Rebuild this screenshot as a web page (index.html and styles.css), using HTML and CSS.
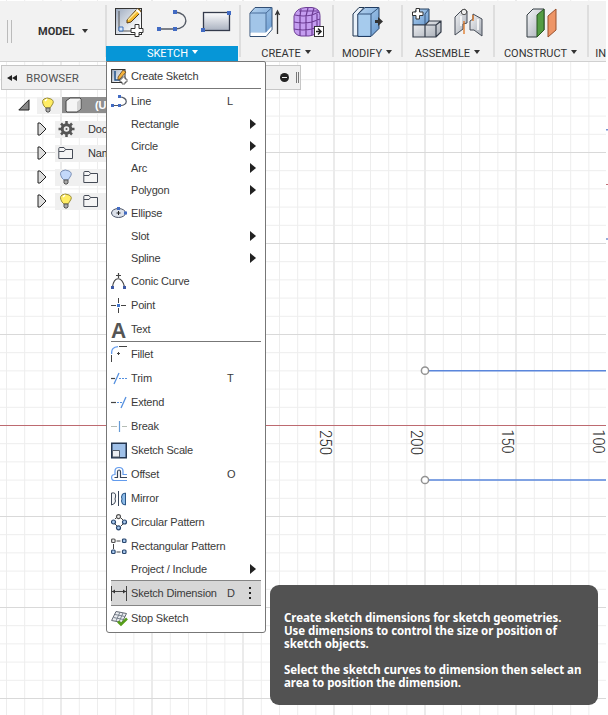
FILE: index.html
```html
<!DOCTYPE html>
<html lang="en">
<head>
<meta charset="utf-8">
<title>Sketch workspace</title>
<link rel="stylesheet" href="styles.css">
</head>
<body>
<div class="app">
  <svg class="canvas" width="608" height="715" viewBox="0 0 608 715">
    <defs>
      <linearGradient id="steel" x1="0" y1="0" x2="1" y2="1"><stop offset="0" stop-color="#9ba9be"/><stop offset=".8" stop-color="#fff"/></linearGradient>
      <linearGradient id="sheet" x1="0" y1="0" x2="0" y2="1"><stop offset="0" stop-color="#fdfdfe"/><stop offset="1" stop-color="#a9b1c0"/></linearGradient>
      <linearGradient id="blue" x1="0" y1="0" x2="1" y2="1"><stop offset="0" stop-color="#b5d3f0"/><stop offset="1" stop-color="#6799cf"/></linearGradient>
      <linearGradient id="grey" x1="0" y1="0" x2="1" y2="1"><stop offset="0" stop-color="#f4f5f7"/><stop offset="1" stop-color="#a6acb5"/></linearGradient>
      <pattern id="minor" width="18.2" height="18.2" patternUnits="userSpaceOnUse" x="60.6" y="61">
        <path d="M.5 0V18.2M0 .5H18.2" stroke="#ededed"/>
      </pattern>
      <pattern id="major" width="91" height="91" patternUnits="userSpaceOnUse" x="60" y="61">
        <path d="M1 0V91" stroke="#ebebeb" stroke-width="2"/><path d="M0 .5H91" stroke="#d9d9d9"/>
      </pattern>
    </defs>
    <rect width="608" height="715" fill="#fff"/>
    <rect width="606" height="715" fill="url(#minor)"/>
    <rect width="606" height="715" fill="url(#major)"/>
    <rect y="425" width="606" height="1" fill="#bd6a70"/>
    <path d="M429 370.7H606M429 480H606" stroke="#5a86dc" stroke-width="1.5"/>
    <g fill="#fff" stroke="#929292" stroke-width="1.5"><circle cx="425" cy="370.7" r="3.6"/><circle cx="425" cy="480" r="3.6"/></g>
    <path d="M606 129.7h2M606 239h2" stroke="#7692d0" stroke-width="1.5"/><path d="M606 184.5h2" stroke="#bc7379"/>
    <g class="scale-labels">
      <text transform="translate(320 430) rotate(90)" textLength="25" lengthAdjust="spacingAndGlyphs">250</text>
      <text transform="translate(411 430) rotate(90)" textLength="25" lengthAdjust="spacingAndGlyphs">200</text>
      <text transform="translate(502 429.500) rotate(90)" textLength="24" lengthAdjust="spacingAndGlyphs">150</text>
      <text transform="translate(593 429.500) rotate(90)" textLength="24" lengthAdjust="spacingAndGlyphs">100</text>
    </g>
  </svg>

  <header class="toolbar">
    <div class="workspace"><i class="grip"></i><span>MODEL</span><i class="caret"></i></div>
    <section class="group sketch">
      <div class="tools">
        <svg width="30" height="32" viewBox="0 0 30 32"><rect x="1.5" y="3.500" width="26" height="26" fill="url(#steel)" stroke="#333"/><path d="M5 6V26H24" fill="none" stroke="#555"/><path d="M5 22h4v4H5z" fill="#d9e8fa" stroke="#3c71ba"/><path d="M13 15L23 4q3-1 4 3L17 17l-4 1z" fill="#f2b82d" stroke="#583c18"/><path d="M14 15L23 6" fill="none" stroke="#ffe999" stroke-width="1.500"/><path d="M22.500 4.500l4 4" stroke="#fff" stroke-width="2"/><path d="M21 19.500h4v4h4v4h-4v4h-4v-4h-4v-4h4z" fill="#fff" stroke="#333"/></svg>
        <svg width="32" height="32" viewBox="0 0 32 32"><path d="M3 24H19C33 24 34 8 19 7" fill="none" stroke="#555b66" stroke-width="1.4"/><path d="M1 22h4v4H1zm16 0h4v4h-4zm0-17h4v4h-4z" fill="#426bc3"/></svg>
        <svg width="32" height="32" viewBox="0 0 32 32"><rect x="3.500" y="7.500" width="26" height="18" fill="url(#sheet)" stroke="#343b4c" stroke-width="1.300"/><path d="M1 23h4v4H1zM27 6h4v4h-4z" fill="#426bc3"/></svg>
      </div>
      <div class="caption">SKETCH<i class="caret"></i></div>
    </section>
    <section class="group create">
      <div class="tools">
        <svg width="34" height="34" viewBox="0 0 34 34"><path d="M2 7L7 1.500h17v22l-6 7H2z" fill="url(#blue)" stroke="#314e74"/><path d="M2.500 7.500H18V26H2.500z" fill="#a2c5e8"/><path d="M2 7h16l6-5.500M18 7v19" fill="none" stroke="#4b6f9b"/><path d="M2.500 26.500H18l5.500-6v3L18 30H2.500z" fill="#fff"/><path d="M29.500 28V6m-2 3l2-4 2 4" fill="none" stroke="#333" stroke-width="1.300"/></svg>
        <svg width="34" height="34" viewBox="0 0 34 34"><path d="M2 10Q4 2 14 1.500h6q8 1 8 8V23q-3 6-11 7H9q-7-1-7-7z" fill="#c49df0" stroke="#6d3d95"/><path d="M3 9q8 2 17 0l7-3M2 16q9 2 18 0l8-3M2 23q9 2 18 0l8-3M9 3L8 10v20M16 2l-2 8v20M22 2l-2 7v20M25 8v16M7 5l19 0" fill="none" stroke="#6d3d95" stroke-width="1.200"/><rect x="22.500" y="20.500" width="9" height="10" fill="#fff" stroke="#333"/><path d="M24 25.500h4m-2-3l3 3-3 3" fill="none" stroke="#222" stroke-width="1.5"/></svg>
      </div>
      <div class="caption">CREATE<i class="caret"></i></div>
    </section>
    <section class="group modify">
      <div class="tools"><svg width="32" height="34" viewBox="0 0 32 34"><path d="M1 8L7 1.500h5L6 8v22H1z" fill="#e9f1f9" stroke="#1f3550"/><path d="M6 8l7-6.500h14v21l-8 8H6z" fill="url(#blue)" stroke="#203c62"/><path d="M6.500 8.500h12v21h-12z" fill="#a6cbed"/><path d="M6 8h13v22M19 8l8-6.500" fill="none" stroke="#36577e"/><path d="M23 14h3v-3l5 4.500-5 4.500v-3h-3z" fill="#333"/></svg></div>
      <div class="caption">MODIFY<i class="caret"></i></div>
    </section>
    <section class="group assemble">
      <div class="tools">
        <svg width="32" height="34" viewBox="0 0 32 34"><path d="M2 8l4-5h12v13l-4 3H2z" fill="url(#blue)" stroke="#26405f"/><path d="M14 8l4-5M14 8v11" stroke="#36577e"/><path d="M2 19h12v12H2zM14 19l4-4h12v11l-5 5H14zM14 19h11v12m0-12l5-4" fill="url(#grey)" stroke="#333b48" stroke-width="1.200"/><path d="M5 2.500h3.500v3.500H12v3.500H8.500V13H5V9.500H1.500V6H5z" fill="#fff" stroke="#333"/></svg>
        <svg width="32" height="34" viewBox="0 0 32 34"><path d="M2 11l7-7q3-2 5 1v12l-4 1v5l-8 6z" fill="url(#grey)" stroke="#444b56"/><circle cx="11" cy="6" r="2.700" fill="#eee" stroke="#555"/><path d="M17 15l3-2V8l9 5v17l-8-6-4 0z" fill="url(#grey)" stroke="#444b56"/><path d="M11 15v13M20 9v6" stroke="#de7622" stroke-width="1.300"/><path d="M8 10v10M25 13v11" stroke="#fff" stroke-width="1.500"/></svg>
      </div>
      <div class="caption">ASSEMBLE<i class="caret"></i></div>
    </section>
    <section class="group construct">
      <div class="tools"><svg width="34" height="34" viewBox="0 0 34 34"><path d="M3 9l6-6h11v21l-7 7H3z" fill="url(#grey)" stroke="#333c42"/><path d="M13 9l7-6v21l-7 7z" fill="#549d43" stroke="#27551f"/><path d="M24 10l8-7v21l-8 7z" fill="#ee9566" stroke="#99502d"/></svg></div>
      <div class="caption">CONSTRUCT<i class="caret"></i></div>
    </section>
    <section class="group inspect"><div class="tools"></div><div class="caption">IN</div></section>
  </header>

  <div class="browser-head"><svg width="12" height="8" viewBox="0 0 12 8"><path d="M5 1v6L0 4zm5 0v6L5 4z" fill="#222"/></svg><span>BROWSER</span><i class="minus"></i><i class="small-grip"></i></div>
  <div class="tree">
    <div class="node root"><svg class="open" width="12" height="12" viewBox="0 0 12 12"><path d="M11 .8V11H.8z" fill="#888" stroke="#222"/></svg><div class="strip"><svg width="25" height="16" viewBox="0 0 25 16"><use href="#bulb" x="3"/></svg><div class="selected"><svg width="18" height="16" viewBox="0 0 18 16"><path d="M1 4l4-3h10l1 1v10l-4 3H2l-1-1z" fill="#f5f5f5" stroke="#444"/><path d="M12 5l3.500-3v9.500L12 14.500z" fill="#d4d4d4"/></svg><b>(U</b></div></div></div>
    <div class="node"><svg class="closed" width="11" height="14" viewBox="0 0 11 14"><path id="fold" d="M1 1l2 0 6 6-6 6H1z" fill="#ddd" stroke="#222"/></svg><div class="strip"><svg width="17" height="16" viewBox="0 0 17 16"><circle cx="8.500" cy="8" r="4.300" fill="#eee" stroke="#555" stroke-width="3"/><path d="M8.500 0v3m0 10v3M.5 8h3m10 0h3M3 2.500l2 2m7 7l2 2m0-11l-2 2m-7 7l-2 2" stroke="#555" stroke-width="2.500"/><circle cx="8.500" cy="8" r="1" fill="#555"/></svg><span>Doc</span></div></div>
    <div class="node"><svg class="closed" width="11" height="14" viewBox="0 0 11 14"><use href="#fold"/></svg><div class="strip"><svg width="17" height="16" viewBox="0 0 17 16"><use href="#folder"/></svg><span>Nam</span></div></div>
    <div class="node"><svg class="closed" width="11" height="14" viewBox="0 0 11 14"><use href="#fold"/></svg><div class="strip"><svg width="17" height="16" viewBox="0 0 17 16"><path d="M4 9Q1 4 4 2t7 0 1 6l-2 3H6z" fill="#c3d8fa" stroke="#7a8fb6"/><path d="M6 11h4v3l-1 1H7l-1-1z" fill="#aaa" stroke="#555"/></svg><svg class="second" width="17" height="16" viewBox="0 0 17 16"><use href="#folder"/></svg></div></div>
    <div class="node"><svg class="closed" width="11" height="14" viewBox="0 0 11 14"><use href="#fold"/></svg><div class="strip"><svg width="17" height="16" viewBox="0 0 17 16"><g id="bulb"><path d="M4 9Q1 4 4 2t7 0 1 6l-2 3H6z" fill="#ffed63" stroke="#9a8c38"/><path d="M6 11h4v3l-1 1H7l-1-1z" fill="#aaa" stroke="#555"/><path d="M5 4l2-2" stroke="#fff" stroke-width="1.500"/></g></svg><svg class="second" width="17" height="16" viewBox="0 0 17 16"><path id="folder" d="M.8 13.500v-10q0-1 1-1h4.200l1.500 2h7v9zM1 6.500h5l1.500-2" fill="#f5f5f5" stroke="#454b56"/></svg></div></div>
  </div>

  <nav class="menu">
    <div class="item"><svg width="17" height="17" viewBox="0 0 17 17"><rect x=".6" y="1.500" width="13.400" height="13" fill="url(#steel)" stroke="#333"/><path d="M4 3v9h7" fill="none" stroke="#23538a" stroke-width="1.500"/><path d="M7 9l5-7 3 2-6 7-2 1z" fill="#f4b23c" stroke="#60431e" stroke-width=".8"/><path d="M11 9h3v2h2v3h-2v2h-3v-2H9v-3h2z" fill="#fff" stroke="#444" stroke-width=".8"/></svg><span>Create Sketch</span></div>
    <hr>
    <div class="item"><svg width="17" height="17" viewBox="0 0 17 17"><path d="M1 12.500h8C17 13 18 4 8 4" fill="none" stroke="#505866" stroke-width="1.200"/><path d="M0 11h3v3H0zm7 0h3v3H7zm0-9h3v3H7z" fill="#426bc3"/></svg><span>Line</span><kbd>L</kbd></div>
    <div class="item plain"><span>Rectangle</span><i class="arrow"></i></div>
    <div class="item plain"><span>Circle</span><i class="arrow"></i></div>
    <div class="item plain"><span>Arc</span><i class="arrow"></i></div>
    <div class="item plain"><span>Polygon</span><i class="arrow"></i></div>
    <div class="item"><svg width="17" height="17" viewBox="0 0 17 17"><ellipse cx="7.500" cy="8" rx="7" ry="4.500" fill="#dce1ea" stroke="#4b5468"/><path d="M5.500 8h4m-2-2v4" stroke="#222"/><path d="M6 2h3v3H6zm7 4.500h3v3h-3z" fill="#426bc3"/></svg><span>Ellipse</span></div>
    <div class="item plain"><span>Slot</span><i class="arrow"></i></div>
    <div class="item plain"><span>Spline</span><i class="arrow"></i></div>
    <div class="item"><svg width="17" height="17" viewBox="0 0 17 17"><path d="M1.500 14C3 3 11 3 13.500 14M7.500 0v5M5 2.500h5" fill="none" stroke="#444" stroke-width="1.200"/><path d="M0 13h3v3H0zm12 0h3v3h-3z" fill="#3d59a5"/></svg><span>Conic Curve</span></div>
    <div class="item"><svg width="17" height="17" viewBox="0 0 17 17"><path d="M0 8.500h5m5 0h5M7.500 1v5m0 5v5" stroke="#444"/><path d="M6 7h3v3H6z" fill="#4276cc"/></svg><span>Point</span></div>
    <div class="item"><svg width="17" height="17" viewBox="0 0 17 17"><text class="letter-icon" x="0" y="16.500" textLength="15" lengthAdjust="spacingAndGlyphs">A</text></svg><span>Text</span></div>
    <hr>
    <div class="item"><svg width="17" height="17" viewBox="0 0 17 17"><path d="M.7 8Q0 1 7 .7" fill="none" stroke="#639bed" stroke-width="1.300"/><path d="M8 .5h8M.5 9v7M6 7.500h3M7.500 6v3" stroke="#444"/></svg><span>Fillet</span></div>
    <div class="item"><svg width="17" height="17" viewBox="0 0 17 17"><path d="M0 8.500h4" stroke="#444" stroke-width="1.200"/><path d="M3 14L8 3" stroke="#5590df" stroke-width="1.300"/><path d="M8 8.500h8" stroke="#5590df" stroke-dasharray="2 1"/></svg><span>Trim</span><kbd>T</kbd></div>
    <div class="item"><svg width="17" height="17" viewBox="0 0 17 17"><path d="M0 8.500h5" stroke="#444" stroke-width="1.200"/><path d="M6 8.500h5" stroke="#5590df" stroke-dasharray="2 1"/><path d="M10 14l5-11" stroke="#5590df" stroke-width="1.300"/></svg><span>Extend</span></div>
    <div class="item"><svg width="17" height="17" viewBox="0 0 17 17"><path d="M0 8.500h6m5 0h5" stroke="#b5bdb5"/><path d="M8.500 3v11" stroke="#669bd6" stroke-width="1.200"/></svg><span>Break</span></div>
    <div class="item"><svg width="17" height="17" viewBox="0 0 17 17"><rect x=".75" y="1.250" width="14.500" height="14.500" fill="#9fc0e8" stroke="#23354f" stroke-width="1.500"/><path d="M1.500 8.500h7V15h-7z" fill="#eceef2" stroke="#555e6b"/></svg><span>Sketch Scale</span></div>
    <div class="item"><svg width="17" height="17" viewBox="0 0 17 17"><path d="M16 14.500H3.500Q.6 14.500.6 11.500T4 8.500V5q0-3.500 4-3.500T12 5v3.500h4" fill="none" stroke="#629bed" stroke-width="1.200"/><path d="M16 11.500h-6.500V6q0-2-1.500-2T6.500 6v5.500H3.500" fill="none" stroke="#374459" stroke-width="1.200"/></svg><span>Offset</span><kbd>O</kbd></div>
    <div class="item"><svg width="17" height="17" viewBox="0 0 17 17"><path d="M.5 15V3q5-1 4 4-1 2 0 4 0 3-4 4z" fill="#f3f5f8" stroke="#3e4858"/><path d="M7.500 1v15" stroke="#374459"/><path d="M14.500 3v12q-4 0-4-4 1-2 0-4 0-4 4-4z" fill="#8ebce9" stroke="#295485"/></svg><span>Mirror</span></div>
    <div class="item"><svg width="17" height="17" viewBox="0 0 17 17"><path d="M4 5l2-2m3 0l3 3M4 10l2 2m6-2l-2 2" stroke="#444"/><g fill="#a9caf0" stroke="#29466d" stroke-width="1.200"><circle cx="7.500" cy="2.700" r="2" fill="#eee" stroke="#555"/><circle cx="2.500" cy="8" r="2"/><circle cx="13.500" cy="8" r="2"/><circle cx="7.500" cy="13.800" r="2"/></g></svg><span>Circular Pattern</span></div>
    <div class="item"><svg width="17" height="17" viewBox="0 0 17 17"><path d="M5.500 3h4M2.500 6v5M5.500 14h4" stroke="#444"/><g fill="#a9caf0" stroke="#29466d" stroke-width="1.200"><rect x=".6" y="1" width="3.500" height="3.500" rx="1" fill="#eee" stroke="#555"/><rect x="11.500" y="1" width="3.500" height="3.500" rx="1"/><rect x=".6" y="12" width="3.500" height="3.500" rx="1"/><rect x="11.500" y="12" width="3.500" height="3.500" rx="1"/></g></svg><span>Rectangular Pattern</span></div>
    <div class="item plain"><span>Project / Include</span><i class="arrow"></i></div>
    <div class="item active"><svg width="17" height="17" viewBox="0 0 17 17"><path d="M.5 1v15m15-15v15M1 6.500h14" stroke="#444"/><path d="M1 6.500l3-2v4zm14 0l-3-2v4z" fill="#333"/></svg><span>Sketch Dimension</span><kbd>D</kbd><i class="dots"></i></div>
    <div class="item"><svg width="17" height="17" viewBox="0 0 17 17"><path d="M.6 10.500L5 1.500l10.500 2-4.500 9z" fill="#eceef1" stroke="#626872"/><path d="M4 4.500l10 2M2.500 7.500l10 2M9 2L5 11m7-8L8 12" stroke="#7b8490"/><path d="M7 11.500l3 3 6-6" fill="none" stroke="#569e19" stroke-width="2.500"/></svg><span>Stop Sketch</span></div>
  </nav>

  <aside class="tip"><p>Create sketch dimensions for sketch geometries.<br>Use dimensions to control the size or position of<br>sketch objects.</p><p>Select the sketch curves to dimension then select an<br>area to position the dimension.</p></aside>
</div>
</body>
</html>
```
FILE: styles.css
```css
* { box-sizing: border-box; }
body { margin: 0; font-family: "Liberation Sans", sans-serif; }
.app { position: relative; width: 608px; height: 715px; padding-top: 1px; overflow: hidden; }
.app svg { display: block; flex: none; }
.canvas { position: absolute; inset: 0; }
.scale-labels text { font: 300 16.500px "Roboto", sans-serif; fill: #222; }

.toolbar { position: relative; display: flex; width: 606px; height: 61px; margin-bottom: 3px; background: #f2f2f2; border-bottom: 1px solid #d0d0d0; font: 11px "Roboto", sans-serif; color: #333; }
.workspace { display: flex; align-items: center; width: 105px; flex: none; padding-left: 7px; font-weight: bold; }
.workspace span { margin-left: 26px; }
.workspace .caret { margin-left: 7px; }
.grip { width: 5px; height: 23px; border: 1px solid #bbb; border-width: 0 1px; }
.caret { display: inline-block; border: 3px solid transparent; border-top: 4px solid #333; border-bottom: 0; margin-left: 4px; vertical-align: 3px; }
.group { flex: none; display: flex; flex-direction: column; background: linear-gradient(#dedede, #dedede) 0 4px / 2px 52px no-repeat; }
.tools { display: flex; height: 45px; padding: 5px 0 0 2px; justify-content: center; gap: 10px; }
.caption { height: 15px; padding-left: 1px; line-height: 16px; text-align: center; white-space: nowrap; }
.sketch { width: 134px; padding-left: 1px; }
.sketch .tools { gap: 12px; padding: 4px 0 0 1px; }
.sketch .caption { margin-right: 1px; background: #0696d7; color: #fff; }
.sketch .caption .caret { border-top-color: #fff; }
.create { width: 93px; }
.modify { width: 69px; }
.assemble { width: 92px; }
.construct { width: 94px; }
.inspect { width: 19px; }
.inspect .caption { text-align: right; padding: 0; }

.browser-head { position: relative; display: flex; align-items: center; width: 300px; height: 25px; margin-left: 1px; padding-left: 5px; background: #f0f0f0; border: 1px solid #c6c6c6; font: 11.500px "Roboto", sans-serif; color: #555; }
.browser-head span { margin-left: 7px; }
.minus { width: 9px; height: 9px; border-radius: 50%; margin-left: auto; background: linear-gradient(#eee, #eee) center / 5px 1px no-repeat #222; }
.small-grip { width: 3px; height: 11px; border: 1px solid #777; border-width: 0 1px; margin: 0 1px 0 7px; }
.tree { position: relative; width: 106px; margin-top: 3px; font-size: 11px; letter-spacing: -.2px; color: #333; }
.node { display: flex; align-items: center; height: 24px; padding-left: 37px; }
.node.root { padding-left: 18px; }
.strip { display: flex; align-items: center; height: 17px; flex: 1; margin-left: 7px; padding-left: 3px; background: #f0f0f0; }
.root .strip { padding-left: 0; }
.strip span { margin-left: 13px; white-space: nowrap; }
.second { margin-left: 8px; }
.selected { display: flex; align-items: center; flex: 1; height: 16px; padding-left: 3px; background: #8e8e8e; color: #fff; }
.selected b { margin-left: 12px; }

.menu { position: absolute; left: 106px; top: 61px; width: 160px; height: 572px; padding: 2px 4px; background: #fff; border: 1px solid #777; border-radius: 0 2px 3px 3px; color: #3a3a3a; font-size: 11px; letter-spacing: -.18px; }
.item { display: grid; grid-template-columns: 20px 96px 22px auto; align-items: center; height: 24px; white-space: nowrap; }
.item span, .item kbd, .arrow, .dots { grid-row: 1; }
.item svg { grid-column: 1; }
.item span { grid-column: 2; }
.item kbd { grid-column: 3; font: inherit; }
.item.plain { height: 22px; }
.arrow, .dots { grid-column: 4; }
.arrow { margin-left: 1px; width: 0; border: 5px solid transparent; border-left: 6px solid #222; border-right: 0; }
.item.active { width: 150px; height: 26px; background: #d7d7d7; border: 1px solid #858585; border-width: 1px 0; }
.dots { width: 2px; height: 12px; background: repeating-linear-gradient(#222 0 2px, transparent 2px 5px); }
.menu hr { width: 150px; height: 1px; margin: 0; border: 0; background: #777; }
.letter-icon { font: bold 22px "Liberation Sans", sans-serif; fill: #555; }

.tip { position: absolute; left: 270px; top: 585px; width: 328px; height: 120px; padding: 26px 14px 0; border-radius: 9px; background: #525252; color: #fff; font: bold 11.5px/13px "Noto Sans", sans-serif; letter-spacing: -.07px; white-space: nowrap; }
.tip p { margin: 0 0 13px; }
```
